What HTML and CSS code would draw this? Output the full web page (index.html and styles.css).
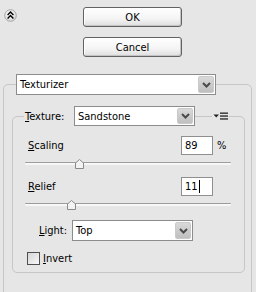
FILE: index.html
```html
<!DOCTYPE html>
<html>
<head>
<meta charset="utf-8">
<link rel="stylesheet" href="styles.css">
</head>
<body>
<div class="top">
  <span class="collapse">
    <svg width="13" height="13" viewBox="0 0 13 13">
      <defs><radialGradient id="cg" cx="0.4" cy="0.35" r="0.7"><stop offset="0" stop-color="#ffffff"/><stop offset="1" stop-color="#d4d4d4"/></radialGradient></defs>
      <circle cx="6.5" cy="6.5" r="5.8" fill="url(#cg)" stroke="#a6a6a6" stroke-width="1"/>
      <polyline points="3.6,6 6.5,3.1 9.4,6" fill="none" stroke="#000" stroke-width="1.4"/>
      <polyline points="3.6,9.4 6.5,6.5 9.4,9.4" fill="none" stroke="#000" stroke-width="1.4"/>
    </svg>
  </span>
  <div class="buttons">
    <button class="btn">OK</button>
    <button class="btn">Cancel</button>
  </div>
</div>

<div class="group outer">
  <div class="head outer-head">
    <div class="select texturizer">
      <span class="value">Texturizer</span>
      <span class="arrow"><svg width="9" height="6" viewBox="0 0 9 6"><polyline points="1,1 4.5,4.5 8,1" fill="none" stroke="#4a4a4a" stroke-width="2"/></svg></span>
    </div>
  </div>

  <div class="group inner">
    <div class="head inner-head">
      <span class="head-label"><u>T</u>exture:</span>
      <div class="select sandstone">
        <span class="value">Sandstone</span>
        <span class="arrow"><svg width="9" height="6" viewBox="0 0 9 6"><polyline points="1,1 4.5,4.5 8,1" fill="none" stroke="#4a4a4a" stroke-width="2"/></svg></span>
      </div>
      <span class="menu-icon">
        <svg width="15" height="8" viewBox="0 0 15 8">
          <polygon points="0.5,2.5 6,2.5 3.25,5.5" fill="#222"/>
          <rect x="7" y="0.5" width="8" height="1.3" fill="#222"/>
          <rect x="7" y="3.4" width="8" height="1.3" fill="#222"/>
          <rect x="7" y="6.3" width="8" height="1.3" fill="#222"/>
        </svg>
      </span>
    </div>

    <div class="param first">
      <span class="label"><u>S</u>caling</span>
      <span class="field">89</span>
      <span class="unit">%</span>
    </div>
    <div class="slider">
      <div class="track"></div>
      <svg class="thumb" style="left:50px" width="9" height="10" viewBox="0 0 9 10"><polygon points="0.5,9.5 0.5,4 4.5,0.5 8.5,4 8.5,9.5" fill="#f3f3f3" stroke="#8a8a8a"/></svg>
    </div>

    <div class="param">
      <span class="label"><u>R</u>elief</span>
      <span class="field">11<span class="caret"></span></span>
      <span class="unit"></span>
    </div>
    <div class="slider">
      <div class="track"></div>
      <svg class="thumb" style="left:42px" width="9" height="10" viewBox="0 0 9 10"><polygon points="0.5,9.5 0.5,4 4.5,0.5 8.5,4 8.5,9.5" fill="#f3f3f3" stroke="#8a8a8a"/></svg>
    </div>

    <div class="light-row">
      <span class="light-label"><u>L</u>ight:</span>
      <div class="select light">
        <span class="value">Top</span>
        <span class="arrow"><svg width="9" height="6" viewBox="0 0 9 6"><polyline points="1,1 4.5,4.5 8,1" fill="none" stroke="#4a4a4a" stroke-width="2"/></svg></span>
      </div>
    </div>

    <label class="check-row">
      <span class="checkbox"></span>
      <span class="check-label"><u>I</u>nvert</span>
    </label>
  </div>
</div>
</body>
</html>
```

FILE: styles.css
```css
html, body {
  margin: 0;
  padding: 0;
  overflow: hidden;
}
body {
  background: #e6e6e6;
  font-family: "DejaVu Sans Condensed", "DejaVu Sans", sans-serif;
  font-size: 11px;
  color: #000;
  width: 256px;
  height: 292px;
}
u { text-decoration: underline; text-underline-offset: 1px; }

.top {
  display: flex;
  padding-top: 7px;
}
.collapse {
  display: block;
  width: 13px;
  height: 13px;
  margin-left: 4px;
  margin-top: 2px;
}
.collapse svg { display: block; }
.buttons {
  margin-left: 66px;
  width: 99px;
  display: flex;
  flex-direction: column;
  gap: 10px;
}
.btn {
  box-sizing: border-box;
  height: 20px;
  width: 99px;
  margin: 0;
  padding: 0;
  font: inherit;
  color: #000;
  border: 1px solid #626262;
  border-radius: 3px;
  background: linear-gradient(#ffffff, #f4f4f4 60%, #dedede);
  box-shadow: inset -1px -1px 0 #c4c4c4, inset 1px 1px 0 #ffffff;
}

.group {
  box-sizing: border-box;
  border: 1px solid #c6c6c6;
  border-radius: 5px;
}
.outer {
  margin: 27px 0 0 3px;
  width: 249px;
  padding-bottom: 40px;
}
.head {
  display: flex;
  align-items: center;
  margin-top: -11px;
}
.outer-head {
  padding-left: 12px;
}

.select {
  box-sizing: border-box;
  display: flex;
  align-items: stretch;
  background: #fff;
  border: 1px solid #8c8c8c;
  padding: 1px;
}
.select .value {
  flex: 1;
  display: flex;
  align-items: center;
  padding-left: 2px;
}
.select .arrow {
  box-sizing: border-box;
  width: 16px;
  display: flex;
  align-items: center;
  justify-content: center;
  background: linear-gradient(#d9d9d9, #bfbfbf);
  border: 1px solid #cacaca;
  border-radius: 2px;
}
.select .arrow svg { display: block; }
.texturizer { width: 200px; height: 21px; }
.sandstone { width: 121px; height: 20px; }
.light { width: 121px; height: 21px; }

.inner {
  margin: 21px 0 0 8px;
  width: 233px;
  padding-bottom: 7px;
}
.inner-head {
  padding-left: 11px;
  height: 20px;
}
.head-label {
  box-sizing: border-box;
  width: 50px;
  padding-left: 1px;
  background: #e6e6e6;
}
.menu-icon {
  display: flex;
  align-items: center;
  margin-left: 17px;
  padding: 0 1px;
  height: 10px;
  background: #e6e6e6;
}
.menu-icon svg { display: block; }

.param {
  display: grid;
  grid-template-columns: 1fr 32px 31px;
  align-items: center;
  padding-left: 15px;
  height: 19px;
  margin-top: 8px;
}
.param.first { margin-top: 10px; }
.field {
  box-sizing: border-box;
  height: 19px;
  background: #fff;
  border: 1px solid #8f8f8f;
  padding-left: 3px;
  display: flex;
  align-items: center;
}
.caret {
  display: inline-block;
  width: 1px;
  height: 13px;
  background: #000;
  margin-left: 1px;
}
.unit { padding-left: 4px; }

.slider {
  position: relative;
  margin-left: 12px;
  width: 206px;
  height: 14px;
}
.track {
  position: relative;
  top: 7px;
  height: 2px;
  border-top: 1px solid #9d9d9d;
  background: #f7f7f7;
  border-radius: 1px;
}
.thumb {
  position: absolute;
  top: 4px;
  display: block;
}

.light-row {
  display: flex;
  align-items: center;
  margin-top: 10px;
  padding-left: 26px;
}
.light-label {
  width: 33px;
}

.check-row {
  display: flex;
  align-items: center;
  margin-top: 11px;
  padding-left: 14px;
  height: 13px;
}
.checkbox {
  box-sizing: border-box;
  width: 13px;
  height: 13px;
  border: 1px solid #4f4f4f;
  background: linear-gradient(135deg, #d6d6d6, #f8f8f8);
}
.check-label { margin-left: 3px; }
```
